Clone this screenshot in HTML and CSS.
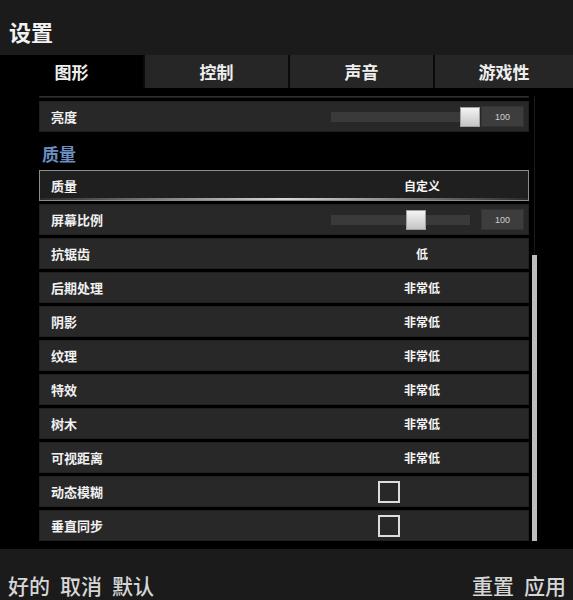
FILE: index.html
```html
<!DOCTYPE html>
<html lang="zh-CN">
<head>
<meta charset="utf-8">
<title>设置</title>
<link rel="stylesheet" href="styles.css">
</head>
<body>
<div class="header">设置</div>
<div class="tabs">
  <div class="tab active">图形</div>
  <div class="tab">控制</div>
  <div class="tab">声音</div>
  <div class="tab">游戏性</div>
</div>
<div class="main">
  <div class="list">
    <div class="row cut"></div>
    <div class="row">
      <span class="label">亮度</span>
      <div class="slider">
        <div class="track"><div class="thumb" style="left:100%"></div></div>
        <div class="num">100</div>
      </div>
    </div>
    <div class="heading">质量</div>
    <div class="row selected"><span class="label">质量</span><span class="val">自定义</span></div>
    <div class="row">
      <span class="label">屏幕比例</span>
      <div class="slider">
        <div class="track"><div class="thumb" style="left:61%"></div></div>
        <div class="num">100</div>
      </div>
    </div>
    <div class="row"><span class="label">抗锯齿</span><span class="val">低</span></div>
    <div class="row"><span class="label">后期处理</span><span class="val">非常低</span></div>
    <div class="row"><span class="label">阴影</span><span class="val">非常低</span></div>
    <div class="row"><span class="label">纹理</span><span class="val">非常低</span></div>
    <div class="row"><span class="label">特效</span><span class="val">非常低</span></div>
    <div class="row"><span class="label">树木</span><span class="val">非常低</span></div>
    <div class="row"><span class="label">可视距离</span><span class="val">非常低</span></div>
    <div class="row"><span class="label">动态模糊</span><span class="check"></span></div>
    <div class="row"><span class="label">垂直同步</span><span class="check"></span></div>
  </div>
  <div class="scroll"><div class="scroll-thumb"></div></div>
</div>
<div class="footer">
  <div class="group"><span>好的</span><span>取消</span><span>默认</span></div>
  <div class="group"><span>重置</span><span>应用</span></div>
</div>
</body>
</html>
```
FILE: styles.css
```css
* { box-sizing: border-box; }
html, body { margin: 0; padding: 0; }
body {
  width: 573px;
  height: 600px;
  background: #000;
  font-family: "Noto Sans CJK SC", "Noto Sans", sans-serif;
  color: #eee;
  display: flex;
  flex-direction: column;
  overflow: hidden;
}
.header {
  height: 55px;
  flex: none;
  background: #1b1b1b;
  display: flex;
  align-items: center;
  padding: 6px 0 0 9px;
  font-size: 22px;
  font-weight: 700;
  color: #f2f2f2;
}
.tabs {
  height: 33px;
  flex: none;
  display: grid;
  grid-template-columns: 143px 143px 143px 1fr;
  column-gap: 2px;
  background: #0a0a0a;
}
.tab {
  background: #262626;
  display: flex;
  align-items: center;
  justify-content: center;
  font-size: 17px;
  font-weight: 700;
  color: #eeeeee;
}
.tab.active { background: #000; }
.main {
  flex: 1;
  display: flex;
  gap: 3px;
  padding: 8px 0 8px 39px;
  min-height: 0;
}
.list {
  width: 490px;
  flex: none;
  overflow: hidden;
  display: flex;
  flex-direction: column;
  gap: 3px;
}
.row {
  height: 31px;
  flex: none;
  background: #282828;
  border: 1px solid #202020;
  display: grid;
  grid-template-columns: 280px 1fr;
  align-items: center;
  padding: 0 4px 0 11px;
}
.row.cut { margin-top: -29px; background: #2e2e2e; }
.row.selected {
  background: linear-gradient(to right, #2a2a2a, #d8d8d8 50%, #2a2a2a) bottom / 100% 2px no-repeat, #1f1f1f;
  border-color: #8c8c8c;
}
.label {
  font-size: 13px;
  font-weight: 700;
  color: #f0f0f0;
}
.val {
  width: 182px;
  text-align: center;
  font-size: 12px;
  font-weight: 700;
  color: #f4f4f4;
}
.check {
  width: 22px;
  height: 22px;
  margin-left: 47px;
  border: 2px solid #dcdcdc;
}
.heading {
  height: 32px;
  flex: none;
  display: flex;
  align-items: center;
  padding: 4px 0 0 3px;
  font-size: 17px;
  font-weight: 700;
  color: #6b8fc0;
}
.slider {
  display: flex;
  align-items: center;
}
.track {
  position: relative;
  width: 139px;
  height: 10px;
  background: #3a3a3a;
}
.thumb {
  position: absolute;
  top: -5px;
  width: 20px;
  height: 20px;
  margin-left: -10px;
  background: linear-gradient(#f4f4f4, #c4c4c4);
  border: 1px solid #a0a0a0;
}
.num {
  margin-left: 11px;
  width: 43px;
  height: 21px;
  background: #3d3d3d;
  border: 1px solid #333;
  display: flex;
  align-items: center;
  justify-content: center;
  font-family: "Liberation Sans", sans-serif;
  font-size: 9px;
  color: #cfcfcf;
}
.scroll {
  width: 5px;
  flex: none;
  display: flex;
  flex-direction: column;
  background: linear-gradient(to right, transparent 2px, #1a1a1a 2px, #1a1a1a 3px, transparent 3px);
}
.scroll-thumb {
  margin-top: 159px;
  flex: 1;
  background: #bdbdbd;
}
.footer {
  height: 51px;
  flex: none;
  background: #1b1b1b;
  display: flex;
  justify-content: space-between;
  align-items: flex-end;
  padding: 0 7px 1px 8px;
  font-size: 21px;
  font-weight: 500;
  line-height: 28px;
  color: #d6d6d6;
}
.group {
  display: flex;
  gap: 10px;
}
```
